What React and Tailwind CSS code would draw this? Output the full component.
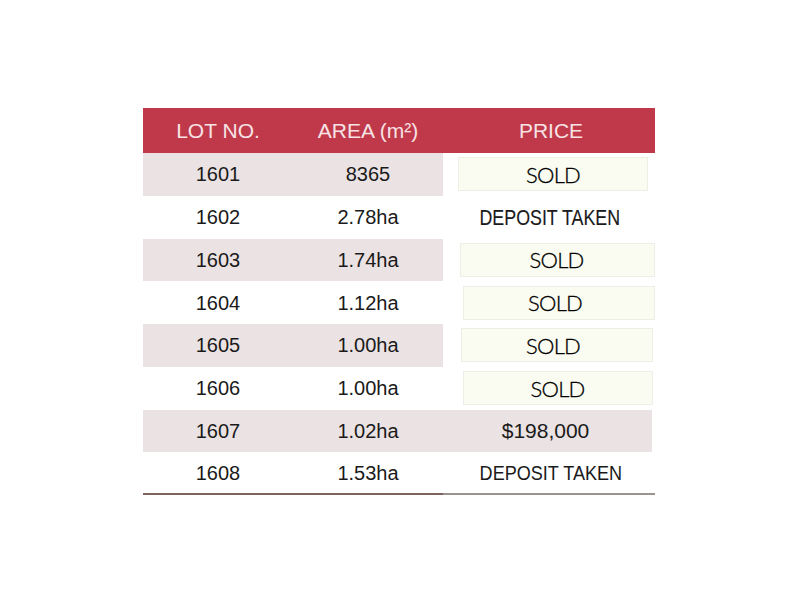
import React from "react";

const rows = [
  { lot: "1601", area: "8365", price: "SOLD", shade: true, shift: "pl-[0px]", box: "w-[190px] ml-[15px]" },
  { lot: "1602", area: "2.78ha", price: "DEPOSIT TAKEN", shade: false },
  { lot: "1603", area: "1.74ha", price: "SOLD", shade: true, shift: "pr-[2px]", box: "w-[195px] ml-[17px]" },
  { lot: "1604", area: "1.12ha", price: "SOLD", shade: false, shift: "pr-[8px]", box: "w-[195px] ml-[20px]" },
  { lot: "1605", area: "1.00ha", price: "SOLD", shade: true, shift: "pr-[8px]", box: "w-[192px] ml-[18px]" },
  { lot: "1606", area: "1.00ha", price: "SOLD", shade: false, shift: "pr-[1px]", box: "w-[190px] ml-[20px]" },
  { lot: "1607", area: "1.02ha", price: "$198,000", shade: true },
  { lot: "1608", area: "1.53ha", price: "DEPOSIT TAKEN", shade: false, last: true },
];

const PriceCell = ({ row }) => {
  if (row.price === "SOLD") {
    return (
      <div className="flex items-center h-full">
        <div
          className={`${row.box} h-[34px] flex items-center justify-center bg-[#fbfcf1] border border-[#eeeee6] ${row.shift}`}
        >
          <span
            className="text-[22px] font-light text-black tracking-[-0.8px] [-webkit-text-stroke:0.3px_#000]"
            style={{ fontFamily: "Lato, sans-serif" }}
          >
            SOLD
          </span>
        </div>
      </div>
    );
  }
  if (row.price === "DEPOSIT TAKEN") {
    return (
      <div className={`flex items-center justify-center h-full ${row.last ? "pl-[4px]" : "pl-[1px]"}`}>
        <span
          className={`inline-block text-[#1a1a1a] ${row.last ? "text-[21px] scale-x-[0.86]" : "text-[22px] scale-x-[0.81] [-webkit-text-stroke:0.15px_#1a1a1a]"}`}
        >
          DEPOSIT TAKEN
        </span>
      </div>
    );
  }
  return (
    <div className="flex items-center justify-center h-full bg-[#ebe2e3] mr-[3px] pr-[4px]">
      <span className="text-[21px] text-[#1a1a1a]">{row.price}</span>
    </div>
  );
};

export default function App() {
  return (
    <div className="w-[800px] h-[600px] bg-white" style={{ fontFamily: "'Liberation Sans', Arial, sans-serif" }}>
      <div className="pt-[108px] pl-[143px]">
        <div className="w-[512px]">
          <div className="grid grid-cols-[150px_150px_212px] h-[45px] bg-[#c0394a] text-[#f7e3e5] text-[21px] items-center">
            <div className="text-center">LOT NO.</div>
            <div className="text-center">AREA (m²)</div>
            <div className="text-center pl-[4px]">PRICE</div>
          </div>
          {rows.map((row) => (
            <div key={row.lot} className="grid grid-cols-[150px_150px_212px] h-[42.75px]">
              <div
                className={`flex items-center justify-center text-[20px] text-[#1a1a1a] ${row.shade ? "bg-[#ebe2e3]" : ""} ${row.last ? "border-b-2 border-[#7d625e]" : ""}`}
              >
                {row.lot}
              </div>
              <div
                className={`flex items-center justify-center text-[20px] text-[#1a1a1a] ${row.shade ? "bg-[#ebe2e3]" : ""} ${row.last ? "border-b-2 border-[#7d625e]" : ""}`}
              >
                {row.area}
              </div>
              <div className={row.last ? "border-b-2 border-[#9c9290]" : ""}>
                <PriceCell row={row} />
              </div>
            </div>
          ))}
        </div>
      </div>
    </div>
  );
}
